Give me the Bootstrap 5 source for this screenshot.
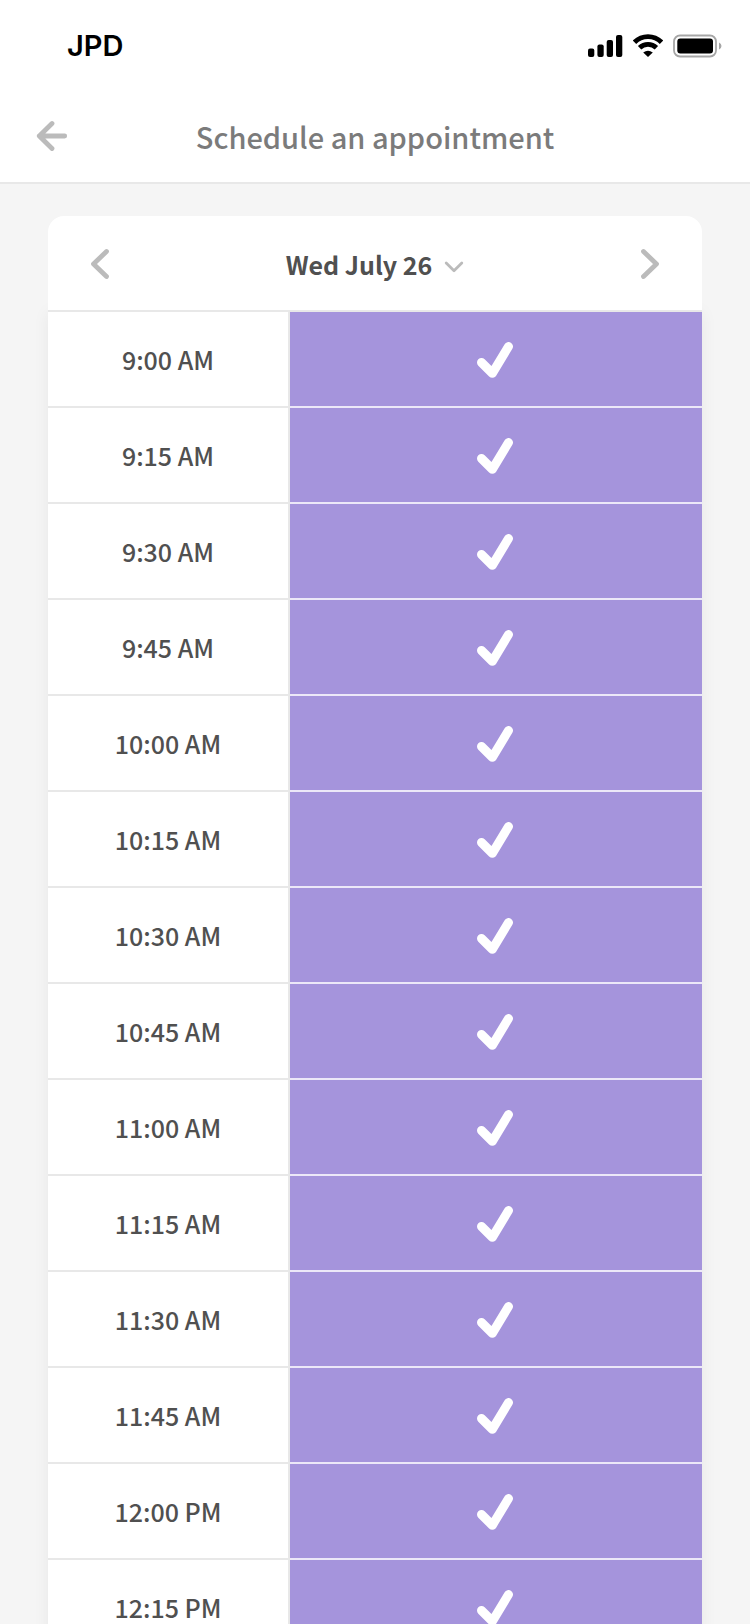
<!DOCTYPE html>
<html lang="en">
<head>
<meta charset="utf-8">
<meta name="viewport" content="width=device-width, initial-scale=1">
<title>Schedule an appointment</title>
<link href="https://cdn.jsdelivr.net/npm/bootstrap@5.3.0/dist/css/bootstrap.min.css" rel="stylesheet">
<style>
  :root { --line: #e8e8e8; --muted: #bbb; --slot: #a594dc; }
  body { background: #f5f5f5; color: #505050; font-family: "Noto Sans CJK SC", "Open Sans", sans-serif; font-size: 25px; font-weight: 500; line-height: 36px; }
  svg { display: block; }
  .status-bar { height: 92px; padding: 0 28px 0 67px; color: #000; font: 600 29px/36px Inter, sans-serif; }
  .status-icons { gap: 10px; }
  .title-bar { height: 92px; padding: 0 36px 2px; border-bottom: 2px solid var(--line); }
  .title-bar h1 { font-size: 29px; font-weight: 500; line-height: 36px; color: #7b7b7b; }
  .side { width: 32px; }
  .icon-btn { border: 0; padding: 0; color: var(--muted); }
  .schedule { padding: 32px 48px 0; }
  .day-bar { height: 96px; padding: 2px 42px 0; border-bottom: 2px solid var(--line); border-radius: 16px 16px 0 0; }
  .day-btn { border: 0; padding: 0; gap: 12px; font-size: 25px; font-weight: 700; line-height: 36px; color: #505050; }
  .day-btn svg { color: var(--muted); }
  .slots { box-shadow: 0 0 16px rgba(0, 0, 0, .06); }
  .slot { height: 96px; cursor: pointer; }
  .slot-time { flex: 0 0 37%; border-right: 2px solid var(--line); border-bottom: 2px solid var(--line); }
  .slot-mark { padding: 2px 2px 0 0; color: #fff; border-bottom: 2px solid #ece8f8; }
  .btn-check:checked + .slot .slot-mark { background: var(--slot); }
  .btn-check:focus-visible + .slot { outline: 3px solid #7057c0; }
</style>
</head>
<body class="vh-100 d-flex flex-column overflow-hidden">
<svg width="0" height="0" class="position-absolute" aria-hidden="true">
  <symbol id="tick" viewBox="0 0 36 36"><path d="M4.500 20.500 15.300 31.300 31.500 4.500" fill="none" stroke="currentColor" stroke-width="9" stroke-linecap="round" stroke-linejoin="round"/></symbol>
</svg>

<div class="status-bar bg-white d-flex align-items-center justify-content-between flex-shrink-0">
  <span>JPD</span>
  <div class="status-icons d-flex align-items-center">
    <svg width="35" height="24" viewBox="0 0 35 24" aria-label="Signal" role="img"><rect y="14.500" width="6.300" height="8.500" rx="2"/><rect x="9.400" y="10.500" width="6.300" height="12.500" rx="2"/><rect x="18.700" y="6" width="6.300" height="17" rx="2"/><rect x="28" y="1" width="6.300" height="22" rx="2"/></svg>
    <svg width="30" height="24" viewBox="0 0 30 24" aria-label="Wi-Fi" role="img"><g fill="none" stroke="#000" stroke-width="4.800"><path d="M1.500 8.200a19.200 19.200 0 0 1 27 0"/><path d="M6.600 13.800a12 12 0 0 1 16.800 0"/></g><path d="M10.200 18.600q4.800-3.600 9.600 0L15 23z"/></svg>
    <svg width="49" height="24" viewBox="0 0 49 24" aria-label="Battery" role="img"><rect x="1" y="1.500" width="42" height="21" rx="6" fill="none" stroke="#a6a6a6" stroke-width="1.800"/><rect x="4.300" y="4.600" width="35.700" height="14.800" rx="3"/><path d="M46 8.500q2.500 1 2.500 3.500t-2.500 3.500z" fill="#a6a6a6"/></svg>
  </div>
</div>

<header class="title-bar bg-white d-flex align-items-center justify-content-between flex-shrink-0">
  <button type="button" class="btn icon-btn side" aria-label="Back"><svg width="32" height="32" viewBox="0 0 32 32" fill="none" stroke="currentColor" stroke-width="4.800" stroke-linecap="round" stroke-linejoin="round"><path d="M16 3.500 3.300 16 16 28.500M3.300 16H28.700"/></svg></button>
  <h1 class="m-0">Schedule an appointment</h1>
  <span class="side"></span>
</header>

<main class="schedule flex-grow-1 overflow-hidden">
  <div class="day-bar bg-white position-relative d-flex align-items-center justify-content-between">
    <button type="button" class="btn icon-btn" aria-label="Previous day"><svg width="22" height="32" viewBox="0 0 22 32" fill="none" stroke="currentColor" stroke-width="4.800" stroke-linecap="round" stroke-linejoin="round"><path d="M16.500 3.500 3.500 16 16.500 28.500"/></svg></button>
    <button type="button" class="btn day-btn d-flex align-items-center">Wed July 26 <svg width="20" height="18" viewBox="0 0 20 18" fill="none" stroke="currentColor" stroke-width="2.800" stroke-linecap="round" stroke-linejoin="round" aria-hidden="true"><path d="M2.200 8 10 15.700 17.800 8"/></svg></button>
    <button type="button" class="btn icon-btn" aria-label="Next day"><svg width="22" height="32" viewBox="0 0 22 32" fill="none" stroke="currentColor" stroke-width="4.800" stroke-linecap="round" stroke-linejoin="round"><path d="M5.500 3.500 18.500 16 5.500 28.500"/></svg></button>
  </div>
  <form class="slots bg-white">
    <input type="checkbox" class="btn-check" id="t0900" checked><label for="t0900" class="slot d-flex"><span class="slot-time d-flex align-items-center justify-content-center">9:00 AM</span><span class="slot-mark flex-grow-1 d-flex align-items-center justify-content-center"><svg width="36" height="36"><use href="#tick"/></svg></span></label>
    <input type="checkbox" class="btn-check" id="t0915" checked><label for="t0915" class="slot d-flex"><span class="slot-time d-flex align-items-center justify-content-center">9:15 AM</span><span class="slot-mark flex-grow-1 d-flex align-items-center justify-content-center"><svg width="36" height="36"><use href="#tick"/></svg></span></label>
    <input type="checkbox" class="btn-check" id="t0930" checked><label for="t0930" class="slot d-flex"><span class="slot-time d-flex align-items-center justify-content-center">9:30 AM</span><span class="slot-mark flex-grow-1 d-flex align-items-center justify-content-center"><svg width="36" height="36"><use href="#tick"/></svg></span></label>
    <input type="checkbox" class="btn-check" id="t0945" checked><label for="t0945" class="slot d-flex"><span class="slot-time d-flex align-items-center justify-content-center">9:45 AM</span><span class="slot-mark flex-grow-1 d-flex align-items-center justify-content-center"><svg width="36" height="36"><use href="#tick"/></svg></span></label>
    <input type="checkbox" class="btn-check" id="t1000" checked><label for="t1000" class="slot d-flex"><span class="slot-time d-flex align-items-center justify-content-center">10:00 AM</span><span class="slot-mark flex-grow-1 d-flex align-items-center justify-content-center"><svg width="36" height="36"><use href="#tick"/></svg></span></label>
    <input type="checkbox" class="btn-check" id="t1015" checked><label for="t1015" class="slot d-flex"><span class="slot-time d-flex align-items-center justify-content-center">10:15 AM</span><span class="slot-mark flex-grow-1 d-flex align-items-center justify-content-center"><svg width="36" height="36"><use href="#tick"/></svg></span></label>
    <input type="checkbox" class="btn-check" id="t1030" checked><label for="t1030" class="slot d-flex"><span class="slot-time d-flex align-items-center justify-content-center">10:30 AM</span><span class="slot-mark flex-grow-1 d-flex align-items-center justify-content-center"><svg width="36" height="36"><use href="#tick"/></svg></span></label>
    <input type="checkbox" class="btn-check" id="t1045" checked><label for="t1045" class="slot d-flex"><span class="slot-time d-flex align-items-center justify-content-center">10:45 AM</span><span class="slot-mark flex-grow-1 d-flex align-items-center justify-content-center"><svg width="36" height="36"><use href="#tick"/></svg></span></label>
    <input type="checkbox" class="btn-check" id="t1100" checked><label for="t1100" class="slot d-flex"><span class="slot-time d-flex align-items-center justify-content-center">11:00 AM</span><span class="slot-mark flex-grow-1 d-flex align-items-center justify-content-center"><svg width="36" height="36"><use href="#tick"/></svg></span></label>
    <input type="checkbox" class="btn-check" id="t1115" checked><label for="t1115" class="slot d-flex"><span class="slot-time d-flex align-items-center justify-content-center">11:15 AM</span><span class="slot-mark flex-grow-1 d-flex align-items-center justify-content-center"><svg width="36" height="36"><use href="#tick"/></svg></span></label>
    <input type="checkbox" class="btn-check" id="t1130" checked><label for="t1130" class="slot d-flex"><span class="slot-time d-flex align-items-center justify-content-center">11:30 AM</span><span class="slot-mark flex-grow-1 d-flex align-items-center justify-content-center"><svg width="36" height="36"><use href="#tick"/></svg></span></label>
    <input type="checkbox" class="btn-check" id="t1145" checked><label for="t1145" class="slot d-flex"><span class="slot-time d-flex align-items-center justify-content-center">11:45 AM</span><span class="slot-mark flex-grow-1 d-flex align-items-center justify-content-center"><svg width="36" height="36"><use href="#tick"/></svg></span></label>
    <input type="checkbox" class="btn-check" id="t1200" checked><label for="t1200" class="slot d-flex"><span class="slot-time d-flex align-items-center justify-content-center">12:00 PM</span><span class="slot-mark flex-grow-1 d-flex align-items-center justify-content-center"><svg width="36" height="36"><use href="#tick"/></svg></span></label>
    <input type="checkbox" class="btn-check" id="t1215" checked><label for="t1215" class="slot d-flex"><span class="slot-time d-flex align-items-center justify-content-center">12:15 PM</span><span class="slot-mark flex-grow-1 d-flex align-items-center justify-content-center"><svg width="36" height="36"><use href="#tick"/></svg></span></label>
  </form>
</main>
<script src="https://cdn.jsdelivr.net/npm/bootstrap@5.3.0/dist/js/bootstrap.bundle.min.js"></script>
</body>
</html>
